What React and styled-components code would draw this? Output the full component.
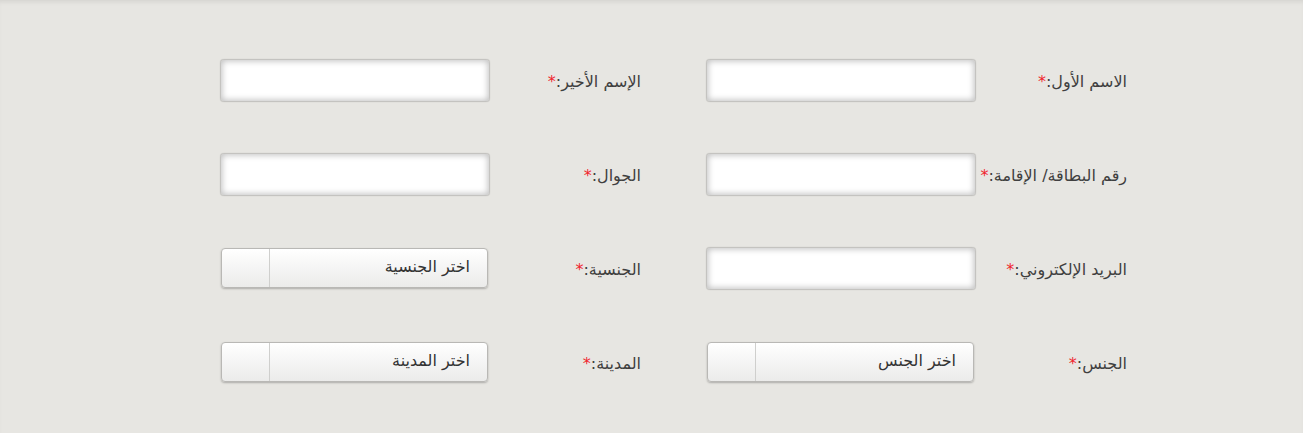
import React from "react";
import styled, { createGlobalStyle } from "styled-components";

const GlobalStyle = createGlobalStyle`
  html, body {
    margin: 0;
    background: #e7e6e2;
    font-family: "DejaVu Sans", "Noto Sans", sans-serif;
  }
`;

const Page = styled.div`
  min-height: 433px;
  box-sizing: border-box;
  direction: rtl;
  padding: 33px 176px 0 0;
  box-shadow: inset 0 4px 4px -2px rgba(0, 0, 0, 0.08);
`;

const Form = styled.form`
  display: grid;
  grid-template-columns: 421px 421px;
  column-gap: 65px;
  grid-auto-rows: 94px;
  width: max-content;
`;

const Field = styled.div`
  display: flex;
  align-items: center;
`;

const Label = styled.label`
  width: 151px;
  flex: none;
  font-size: 16px;
  color: #3f3f3f;
  white-space: nowrap;
  padding-top: 2px;
`;

const Star = styled.span`
  color: #f0262f;
`;

const Input = styled.input`
  width: 270px;
  height: 43px;
  box-sizing: border-box;
  border: 1px solid #c4c3c0;
  border-radius: 4px;
  background: #fff;
  box-shadow: inset 0 0 6px 1px rgba(0, 0, 0, 0.25), 0 0 1px rgba(0, 0, 0, 0.2);
  outline: none;
  padding: 0 8px;
  font: inherit;
  font-size: 15px;
  direction: rtl;
  caret-color: #222;
`;

const Select = styled.div`
  width: 267px;
  height: 40px;
  margin-right: 2px;
  box-sizing: border-box;
  border: 1px solid #b9b8b5;
  border-radius: 4px;
  background: linear-gradient(#ffffff, #ebebea);
  box-shadow: 0 1px 2px rgba(0, 0, 0, 0.25);
  display: flex;
  align-items: center;
  font-size: 16px;
  color: #333;
`;

const SelectText = styled.span`
  flex: 1;
  padding-right: 17px;
  padding-bottom: 3px;
`;

const Arrow = styled.span`
  width: 47px;
  align-self: stretch;
  border-right: 1px solid #cfcfcd;
`;

const fields = [
  { label: "الاسم الأول:", type: "input" },
  { label: "الإسم الأخير:", type: "input" },
  { label: "رقم البطاقة/ الإقامة:", type: "input" },
  { label: "الجوال:", type: "input", focus: true },
  { label: "البريد الإلكتروني:", type: "input" },
  { label: "الجنسية:", type: "select", placeholder: "اختر الجنسية" },
  { label: "الجنس:", type: "select", placeholder: "اختر الجنس" },
  { label: "المدينة:", type: "select", placeholder: "اختر المدينة" },
];

function App() {
  return (
    <Page>
      <GlobalStyle />
      <Form onSubmit={(e) => e.preventDefault()}>
        {fields.map((f) => (
          <Field key={f.label}>
            <Label>
              {f.label}
              <Star>*</Star>
            </Label>
            {f.type === "input" ? (
              <Input type="text" autoFocus={f.focus} />
            ) : (
              <Select>
                <SelectText>{f.placeholder}</SelectText>
                <Arrow />
              </Select>
            )}
          </Field>
        ))}
      </Form>
    </Page>
  );
}

export default App;
